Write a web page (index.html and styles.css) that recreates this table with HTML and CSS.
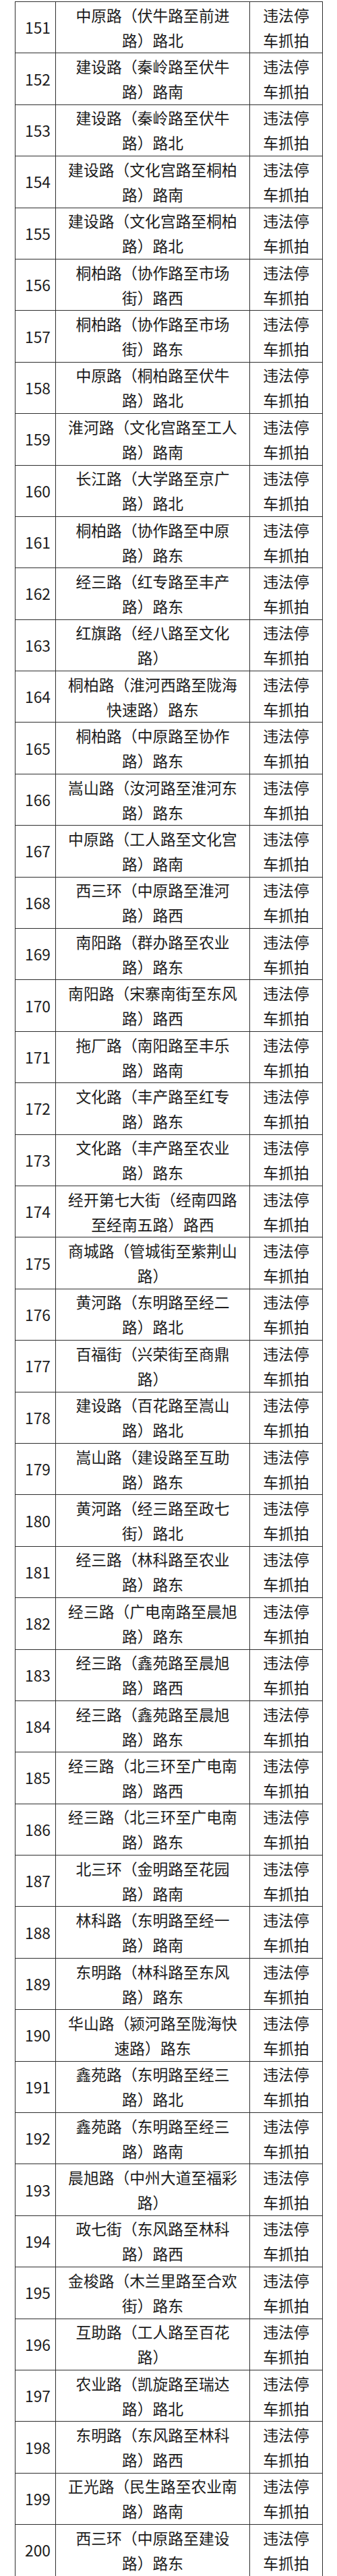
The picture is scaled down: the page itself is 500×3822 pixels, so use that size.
FILE: index.html
```html
<!DOCTYPE html>
<html lang="zh-CN">
<head>
<meta charset="utf-8">
<title>违法停车抓拍点位</title>
<link rel="stylesheet" href="styles.css">
</head>
<body>
<table class="list">
<colgroup><col class="c-no"><col class="c-road"><col class="c-type"></colgroup>
<tbody>
<tr><td>151</td><td>中原路（伏牛路至前进路）路北</td><td>违法停车抓拍</td></tr>
<tr><td>152</td><td>建设路（秦岭路至伏牛路）路南</td><td>违法停车抓拍</td></tr>
<tr><td>153</td><td>建设路（秦岭路至伏牛路）路北</td><td>违法停车抓拍</td></tr>
<tr><td>154</td><td>建设路（文化宫路至桐柏路）路南</td><td>违法停车抓拍</td></tr>
<tr><td>155</td><td>建设路（文化宫路至桐柏路）路北</td><td>违法停车抓拍</td></tr>
<tr><td>156</td><td>桐柏路（协作路至市场街）路西</td><td>违法停车抓拍</td></tr>
<tr><td>157</td><td>桐柏路（协作路至市场街）路东</td><td>违法停车抓拍</td></tr>
<tr><td>158</td><td>中原路（桐柏路至伏牛路）路北</td><td>违法停车抓拍</td></tr>
<tr><td>159</td><td>淮河路（文化宫路至工人路）路南</td><td>违法停车抓拍</td></tr>
<tr><td>160</td><td>长江路（大学路至京广路）路北</td><td>违法停车抓拍</td></tr>
<tr><td>161</td><td>桐柏路（协作路至中原路）路东</td><td>违法停车抓拍</td></tr>
<tr><td>162</td><td>经三路（红专路至丰产路）路东</td><td>违法停车抓拍</td></tr>
<tr><td>163</td><td>红旗路（经八路至文化路）</td><td>违法停车抓拍</td></tr>
<tr><td>164</td><td>桐柏路（淮河西路至陇海快速路）路东</td><td>违法停车抓拍</td></tr>
<tr><td>165</td><td>桐柏路（中原路至协作路）路东</td><td>违法停车抓拍</td></tr>
<tr><td>166</td><td>嵩山路（汝河路至淮河东路）路东</td><td>违法停车抓拍</td></tr>
<tr><td>167</td><td>中原路（工人路至文化宫路）路南</td><td>违法停车抓拍</td></tr>
<tr><td>168</td><td>西三环（中原路至淮河路）路西</td><td>违法停车抓拍</td></tr>
<tr><td>169</td><td>南阳路（群办路至农业路）路东</td><td>违法停车抓拍</td></tr>
<tr><td>170</td><td>南阳路（宋寨南街至东风路）路西</td><td>违法停车抓拍</td></tr>
<tr><td>171</td><td>拖厂路（南阳路至丰乐路）路南</td><td>违法停车抓拍</td></tr>
<tr><td>172</td><td>文化路（丰产路至红专路）路东</td><td>违法停车抓拍</td></tr>
<tr><td>173</td><td>文化路（丰产路至农业路）路东</td><td>违法停车抓拍</td></tr>
<tr><td>174</td><td>经开第七大街（经南四路至经南五路）路西</td><td>违法停车抓拍</td></tr>
<tr><td>175</td><td>商城路（管城街至紫荆山路）</td><td>违法停车抓拍</td></tr>
<tr><td>176</td><td>黄河路（东明路至经二路）路北</td><td>违法停车抓拍</td></tr>
<tr><td>177</td><td>百福街（兴荣街至商鼎路）</td><td>违法停车抓拍</td></tr>
<tr><td>178</td><td>建设路（百花路至嵩山路）路北</td><td>违法停车抓拍</td></tr>
<tr><td>179</td><td>嵩山路（建设路至互助路）路东</td><td>违法停车抓拍</td></tr>
<tr><td>180</td><td>黄河路（经三路至政七街）路北</td><td>违法停车抓拍</td></tr>
<tr><td>181</td><td>经三路（林科路至农业路）路东</td><td>违法停车抓拍</td></tr>
<tr><td>182</td><td>经三路（广电南路至晨旭路）路东</td><td>违法停车抓拍</td></tr>
<tr><td>183</td><td>经三路（鑫苑路至晨旭路）路西</td><td>违法停车抓拍</td></tr>
<tr><td>184</td><td>经三路（鑫苑路至晨旭路）路东</td><td>违法停车抓拍</td></tr>
<tr><td>185</td><td>经三路（北三环至广电南路）路西</td><td>违法停车抓拍</td></tr>
<tr><td>186</td><td>经三路（北三环至广电南路）路东</td><td>违法停车抓拍</td></tr>
<tr><td>187</td><td>北三环（金明路至花园路）路南</td><td>违法停车抓拍</td></tr>
<tr><td>188</td><td>林科路（东明路至经一路）路南</td><td>违法停车抓拍</td></tr>
<tr><td>189</td><td>东明路（林科路至东风路）路东</td><td>违法停车抓拍</td></tr>
<tr><td>190</td><td>华山路（颍河路至陇海快速路）路东</td><td>违法停车抓拍</td></tr>
<tr><td>191</td><td>鑫苑路（东明路至经三路）路北</td><td>违法停车抓拍</td></tr>
<tr><td>192</td><td>鑫苑路（东明路至经三路）路南</td><td>违法停车抓拍</td></tr>
<tr><td>193</td><td>晨旭路（中州大道至福彩路）</td><td>违法停车抓拍</td></tr>
<tr><td>194</td><td>政七街（东风路至林科路）路西</td><td>违法停车抓拍</td></tr>
<tr><td>195</td><td>金梭路（木兰里路至合欢街）路东</td><td>违法停车抓拍</td></tr>
<tr><td>196</td><td>互助路（工人路至百花路）</td><td>违法停车抓拍</td></tr>
<tr><td>197</td><td>农业路（凯旋路至瑞达路）路北</td><td>违法停车抓拍</td></tr>
<tr><td>198</td><td>东明路（东风路至林科路）路西</td><td>违法停车抓拍</td></tr>
<tr><td>199</td><td>正光路（民生路至农业南路）路南</td><td>违法停车抓拍</td></tr>
<tr><td>200</td><td>西三环（中原路至建设路）路东</td><td>违法停车抓拍</td></tr>
</tbody>
</table>
</body>
</html>
```

FILE: styles.css
```css
html, body {
  margin: 0;
  padding: 0;
  background: #ffffff;
}

body {
  font-family: "Noto Sans CJK SC", "Noto Sans", sans-serif;
  color: #1c1c1c;
}

.list {
  border-collapse: collapse;
  table-layout: fixed;
  width: 456px;
  margin: 2px 0 0 22px;
  font-size: 22.8px;
  line-height: 37px;
  text-spacing-trim: space-all;
}

.c-no { width: 60px; }
.c-road { width: 288px; }
.c-type { width: 108px; }

.list tr {
  height: 76.4px;
}

.list td {
  border: 1px solid #2e2e2e;
  padding: 0 14px;
  text-align: center;
  vertical-align: middle;
}
```
